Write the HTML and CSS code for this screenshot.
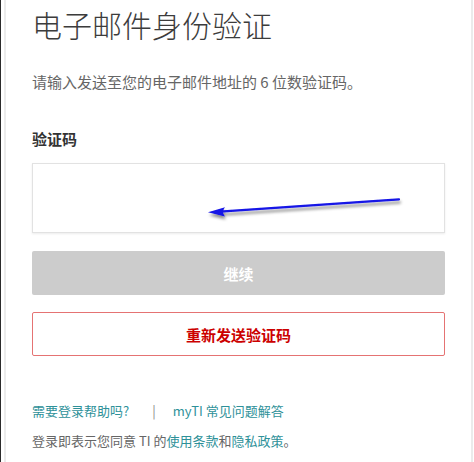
FILE: index.html
```html
<!DOCTYPE html>
<html lang="zh-CN">
<head>
    <meta charset="UTF-8">
    <meta name="viewport" content="width=device-width, initial-scale=1.0">
    <title>电子邮件身份验证</title>
    <link rel="stylesheet" href="styles.css">
</head>
<body>

    <div class="card">
        <h1 class="title">电子邮件身份验证</h1>
        <p class="intro">请输入发送至您的电子邮件地址的 6 位数验证码。</p>

        <label class="label" for="code">验证码</label>
        <div class="input-wrap">
            <input class="code-input" id="code" type="text">
            <svg class="arrow" width="240" height="40" viewBox="0 0 240 40">
                <defs>
                    <filter id="shadow" x="-10%" y="-50%" width="120%" height="200%">
                        <feDropShadow dx="1" dy="3" stdDeviation="1.6" flood-color="#000" flood-opacity="0.45"/>
                    </filter>
                </defs>
                <g filter="url(#shadow)">
                    <line x1="231" y1="9.3" x2="52" y2="21.6" stroke="#1414e6" stroke-width="2.2" stroke-linecap="round"/>
                    <path d="M40 22.3 L57 17.2 Q53 21.6 57 26.6 Z" fill="#1414e6"/>
                </g>
            </svg>
        </div>

        <button class="button continue" disabled>继续</button>
        <button class="button resend">重新发送验证码</button>

        <div class="help">
            <a href="#">需要登录帮助吗?</a>
            <span class="sep">|</span>
            <a href="#">myTI 常见问题解答</a>
        </div>
        <p class="terms">登录即表示您同意 TI 的<a href="#">使用条款</a>和<a href="#">隐私政策</a>。</p>
    </div>

</body>
</html>
```

FILE: styles.css
```css
body {
    margin: 0;
    padding: 0;
    height: 462px;
    overflow: hidden;
    background: #ffffff;
    border-left: 1px solid #2b2b2b;
    font-family: "Noto Sans CJK SC", "Noto Sans", sans-serif;
    color: #333333;
}

.card {
    margin-left: 3px;
    width: 469px;
    height: 100%;
    border-left: 2px solid #ebebeb;
    border-right: 2px solid #ebebeb;
    padding: 6px 26px 0 26px;
    box-sizing: border-box;
    display: flex;
    flex-direction: column;
}

.title {
    margin: 0;
    font-size: 30px;
    line-height: 36px;
    font-weight: 300;
    color: #3c3c3c;
}

.intro {
    margin: 29px 0 0;
    font-size: 15px;
    line-height: 22px;
    color: #666666;
}

.label {
    margin-top: 35px;
    font-size: 15px;
    line-height: 22px;
    font-weight: bold;
    color: #333333;
}

.input-wrap {
    position: relative;
    margin-top: 13px;
}

.code-input {
    display: block;
    width: 100%;
    height: 70px;
    box-sizing: border-box;
    border: 1px solid #e2e2e2;
    box-shadow: 0 1px 2px rgba(0, 0, 0, 0.08);
    outline: none;
    background: #ffffff;
}

.arrow {
    position: absolute;
    left: 136px;
    top: 27px;
    pointer-events: none;
}

.button {
    display: block;
    width: 100%;
    height: 44px;
    border-radius: 2px;
    font-family: inherit;
    font-size: 15px;
    font-weight: bold;
    cursor: pointer;
}

.continue {
    margin-top: 18px;
    background: #cccccc;
    border: none;
    color: #ffffff;
}

.resend {
    margin-top: 17px;
    background: #ffffff;
    border: 1px solid #e57373;
    color: #cc0000;
}

.help {
    margin-top: 45px;
    display: flex;
    align-items: center;
    font-size: 13px;
    line-height: 20px;
}

.help a,
.terms a {
    color: #2e9199;
    text-decoration: none;
}

.sep {
    margin: 0 17px 0 23px;
    color: #888888;
}

.terms {
    margin: 10px 0 0;
    font-size: 13px;
    line-height: 20px;
    color: #666666;
}
```
